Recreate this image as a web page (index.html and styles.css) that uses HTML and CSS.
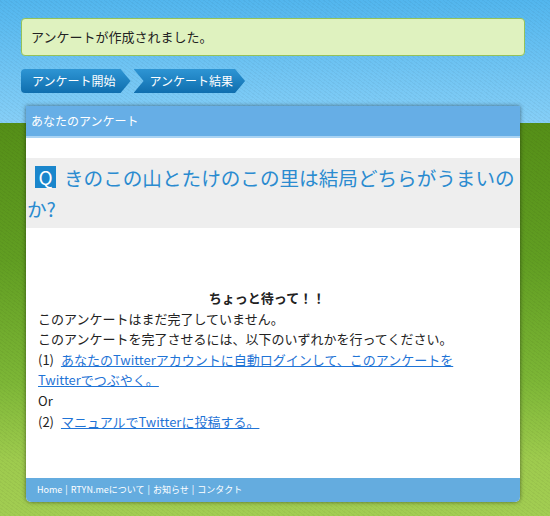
FILE: index.html
```html
<!DOCTYPE html>
<html lang="ja">
<head>
    <meta charset="UTF-8">
    <title>あなたのアンケート</title>
    <link rel="stylesheet" href="styles.css">
</head>
<body>
    <div class="page">
        <div class="notice">アンケートが作成されました。</div>

        <nav class="crumbs">
            <a class="crumb first" href="#">アンケート開始</a>
            <a class="crumb" href="#">アンケート結果</a>
        </nav>

        <div class="panel">
            <div class="panel-head">あなたのアンケート</div>

            <h2 class="question"><span class="q-mark">Q</span>きのこの山とたけのこの里は結局どちらがうまいのか?</h2>

            <div class="panel-body">
                <p class="wait">ちょっと待って！！</p>
                <p>このアンケートはまだ完了していません。</p>
                <p>このアンケートを完了させるには、以下のいずれかを行ってください。</p>
                <p>(1) <a href="#">あなたのTwitterアカウントに自動ログインして、このアンケートをTwitterでつぶやく。</a></p>
                <p>Or</p>
                <p>(2) <a href="#">マニュアルでTwitterに投稿する。</a></p>
            </div>

            <div class="panel-foot">
                Home | RTYN.meについて | お知らせ | コンタクト
            </div>
        </div>
    </div>
</body>
</html>
```

FILE: styles.css
```css
* { box-sizing: border-box; }
html, body { margin: 0; }
body {
    min-height: 516px;
    font-family: "Noto Sans CJK JP", "Noto Sans", sans-serif;
    color: #222;
    background:
        repeating-linear-gradient(37deg, rgba(0,0,0,0.04) 0 1px, transparent 1px 3px),
        linear-gradient(to bottom, #52b6ee 0, #86cff7 123px, #558f18 123px, #619e22 260px, #7cb636 380px, #9ecb4e 460px, #a2cd52 516px);
    background-repeat: no-repeat;
    background-size: 100% 516px;
}
.page { padding: 18px 25px 0 21px; }

.notice {
    height: 38px;
    padding: 0 9px;
    line-height: 36px;
    font-size: 13px;
    background: #dff2bf;
    border: 1px solid #93c25a;
    border-radius: 4px;
}

.crumbs { display: flex; gap: 3px; margin-top: 13px; height: 24px; }
.crumb {
    display: block;
    height: 24px;
    line-height: 24px;
    padding: 0 12px 0 16px;
    font-size: 12px;
    color: #fff;
    text-decoration: none;
    background: linear-gradient(to bottom, #2e95d4, #0f6eae);
    clip-path: polygon(0 0, calc(100% - 10px) 0, 100% 50%, calc(100% - 10px) 100%, 0 100%, 10px 50%);
}
.crumb.first {
    padding: 0 15px 0 11px;
    border-radius: 4px 0 0 4px;
    clip-path: polygon(0 0, calc(100% - 10px) 0, 100% 50%, calc(100% - 10px) 100%, 0 100%);
}

.panel {
    width: 494px;
    margin: 13px 0 0 5px;
    background: #fff;
    border-radius: 0 0 5px 5px;
    box-shadow: 0 0 4px rgba(0,0,0,0.5);
}
.panel-head {
    height: 32px;
    padding-left: 5px;
    line-height: 29px;
    font-size: 12px;
    color: #fff;
    background: #66aee6;
    border-bottom: 2px solid #a9d3f3;
}

.question {
    margin: 20px 0 0;
    padding: 4px 0 4px 1px;
    line-height: 31px;
    font-size: 19.6px;
    font-weight: normal;
    color: #2a8bd0;
    background: #eee;
}
.q-mark {
    display: inline-block;
    width: 21px;
    height: 22px;
    margin: 0 8px 0 8px;
    line-height: 22px;
    text-align: center;
    font-size: 19px;
    color: #fff;
    background: #1a86cc;
    vertical-align: 1px;
}

.panel-body {
    padding: 60px 24px 46px 12px;
    font-size: 13px;
    line-height: 20.6px;
}
.panel-body p { margin: 0; }
.panel-body a { margin-left: 4px; color: #1f74d6; }
.wait { text-align: center; font-weight: bold; }

.panel-foot {
    height: 24px;
    padding-left: 11px;
    line-height: 24px;
    font-size: 9px;
    word-spacing: 1px;
    color: #fff;
    background: #64acdf;
    border-radius: 0 0 5px 5px;
}
```
